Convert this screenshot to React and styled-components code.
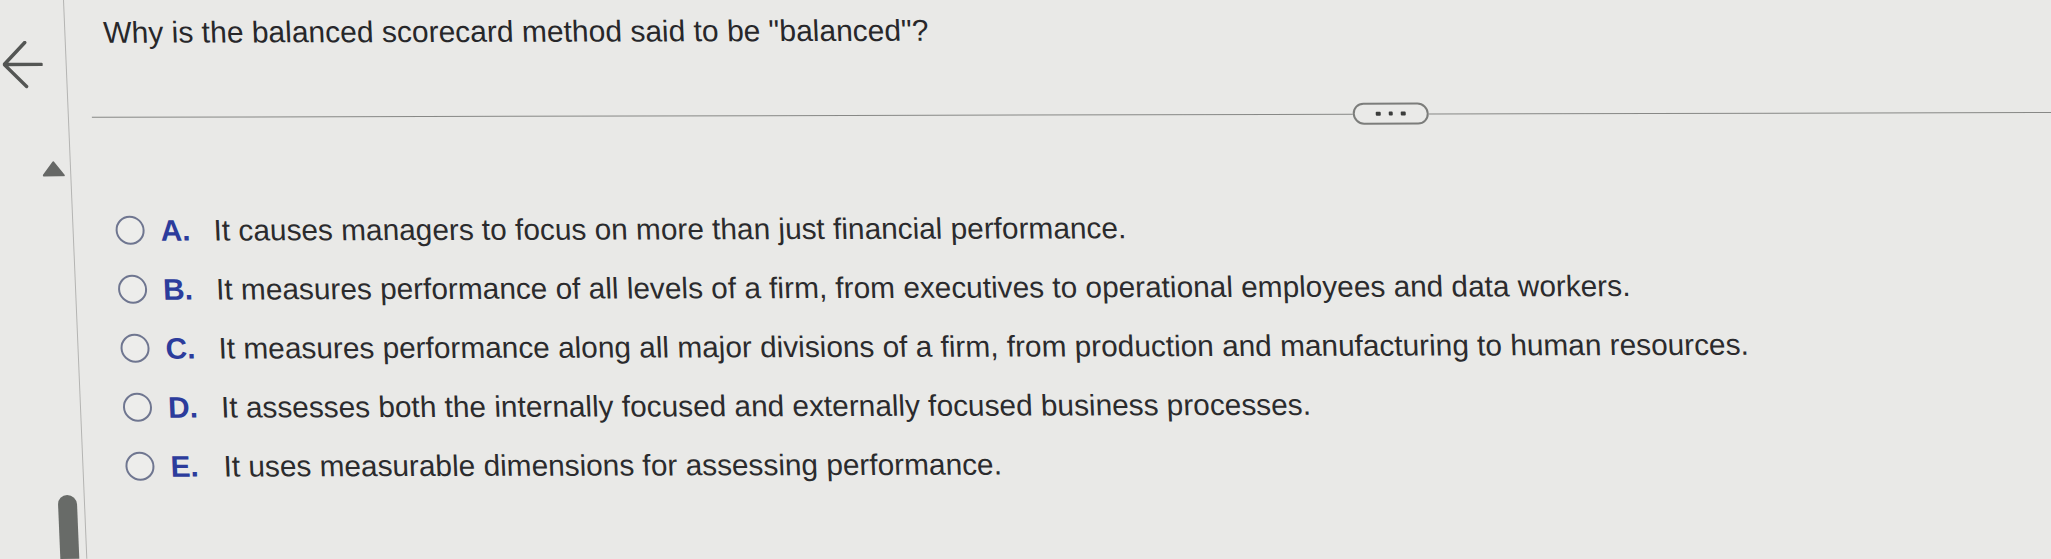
import React from 'react';
import styled, { createGlobalStyle } from 'styled-components';

const GlobalStyle = createGlobalStyle`
  html, body {
    margin: 0;
    padding: 0;
    background: #e9e9e7;
    overflow: hidden;
  }
  body {
    font-family: "Liberation Sans", Arial, Helvetica, sans-serif;
  }
`;

const choices = [
  { letter: 'A', text: 'It causes managers to focus on more than just financial performance.' },
  { letter: 'B', text: 'It measures performance of all levels of a firm, from executives to operational employees and data workers.' },
  { letter: 'C', text: 'It measures performance along all major divisions of a firm, from production and manufacturing to human resources.' },
  { letter: 'D', text: 'It assesses both the internally focused and externally focused business processes.' },
  { letter: 'E', text: 'It uses measurable dimensions for assessing performance.' },
];

const App = () => {
  return (
    <>
      <GlobalStyle />
      <Page>
        <Sidebar>
          <BackButton aria-label="Back">
            <svg width="40" height="48" viewBox="0 0 40 48" fill="none">
              <path d="M39 23.5H2M23 1.5L1.5 23.5L23 45.5" stroke="#545654" strokeWidth="3.4" strokeLinecap="round" strokeLinejoin="round" />
            </svg>
          </BackButton>
          <Caret>
            <svg width="23" height="16" viewBox="0 0 23 16">
              <path d="M11.5 1.5L21.5 14.5H1.5Z" fill="#666866" stroke="#666866" strokeWidth="2" strokeLinejoin="round" />
            </svg>
          </Caret>
          <Grow />
          <ScrollThumb />
        </Sidebar>
        <Main>
          <Question>Why is the balanced scorecard method said to be "balanced"?</Question>
          <Divider>
            <DividerLine $fixed />
            <MoreButton aria-label="More">
              <Dot />
              <Dot />
              <Dot />
            </MoreButton>
            <DividerLine />
          </Divider>
          <Choices>
            {choices.map((c) => (
              <Choice key={c.letter}>
                <Radio />
                <Letter>{c.letter}.</Letter>
                <ChoiceText>{c.text}</ChoiceText>
              </Choice>
            ))}
          </Choices>
        </Main>
      </Page>
    </>
  );
};

const Page = styled.div`
  display: flex;
  width: 2051px;
  height: 559px;
  transform: skewX(2.25deg) rotate(-0.14deg);
  transform-origin: 0 0;
`;

const Sidebar = styled.div`
  width: 63px;
  flex: 0 0 63px;
  display: flex;
  flex-direction: column;
  border-right: 1.5px solid #b4b4b2;
`;

const BackButton = styled.button`
  border: none;
  background: none;
  padding: 0;
  margin-top: 41px;
  width: 40px;
  height: 48px;
  cursor: pointer;
  display: block;
`;

const Caret = styled.div`
  margin-top: 72px;
  margin-left: 35px;
  width: 23px;
  height: 16px;
  line-height: 0;
`;

const Grow = styled.div`
  flex: 1;
`;

const ScrollThumb = styled.div`
  width: 19px;
  height: 64px;
  margin-left: 37px;
  background: #686b68;
  border-radius: 10px 10px 0 0;
`;

const Main = styled.div`
  flex: 1;
  display: flex;
  flex-direction: column;
`;

const Question = styled.div`
  margin-top: 15px;
  padding-left: 38px;
  font-size: 30px;
  line-height: 36px;
  color: #27272a;
  white-space: nowrap;
`;

const Divider = styled.div`
  display: flex;
  align-items: center;
  margin-top: 55px;
  margin-left: 23px;
  height: 22px;
`;

const DividerLine = styled.div`
  height: 0;
  border-top: 1.5px solid #878886;
  flex: ${(props) => (props.$fixed ? '0 0 1261px' : '1')};
`;

const MoreButton = styled.button`
  box-sizing: border-box;
  width: 76px;
  height: 22px;
  border: 2px solid #7c7d7b;
  border-radius: 11px;
  background: #eaeae8;
  display: flex;
  align-items: center;
  justify-content: center;
  gap: 8px;
  padding: 0;
  cursor: pointer;
`;

const Dot = styled.span`
  width: 4.5px;
  height: 4.5px;
  border-radius: 1px;
  background: #3c3d3c;
`;

const Choices = styled.ul`
  list-style: none;
  margin: 73px 0 0;
  padding: 0 0 0 42px;
`;

const Choice = styled.li`
  display: flex;
  align-items: center;
  height: 59px;
`;

const Radio = styled.span`
  box-sizing: border-box;
  width: 29px;
  height: 29px;
  flex: 0 0 29px;
  border: 2.6px solid #6f7690;
  border-radius: 50%;
  background: #ededeb;
  margin-right: 16px;
`;

const Letter = styled.span`
  width: 53px;
  flex: 0 0 53px;
  font-size: 29.8px;
  line-height: 34px;
  font-weight: bold;
  color: #2c3c9c;
`;

const ChoiceText = styled.span`
  font-size: 29.8px;
  line-height: 34px;
  color: #2b2b2d;
  white-space: nowrap;
`;

export default App;
